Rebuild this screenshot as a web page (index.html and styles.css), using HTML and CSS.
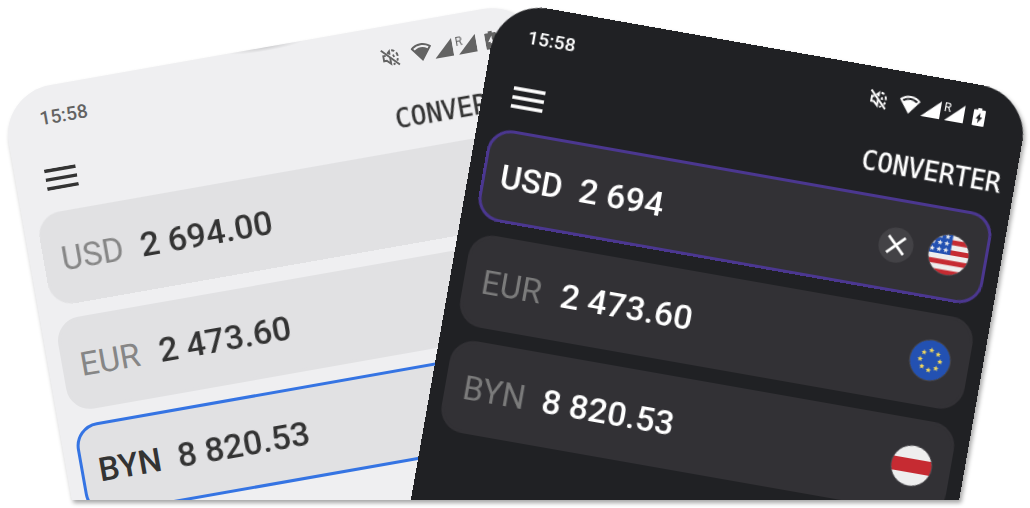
FILE: index.html
```html
<!DOCTYPE html>
<html lang="en">
<head>
<meta charset="utf-8">
<title>Converter</title>
<link rel="stylesheet" href="styles.css">
</head>
<body>
<svg class="symbols" aria-hidden="true">
  <symbol id="mute" viewBox="0 0 20 20">
    <g fill="none" stroke="currentColor" stroke-width="1.900">
      <path d="M1.500 1.500 18 18.500"/>
      <path d="M5.500 7.500H3v5h2.700l3.800 3.700V10M7.300 5.700 9.500 3.500V7"/>
      <path d="M12.500 7.500q1 .8 1 2.500"/>
      <path d="M11.800 2.800q1.700.3 3 1.300M16.300 5.800q1 1.700 1 3.700M17 11.800q-.3 1.300-1 2.400M13.800 16.300q-1 .6-2 .8"/>
    </g>
  </symbol>
  <symbol id="wifi" viewBox="0 0 21 20">
    <path fill="currentColor" fill-rule="evenodd" d="M10.500 1C6.500 1 2.800 2.600 0 5.200L10.500 19 21 5.200C18.200 2.600 14.500 1 10.500 1ZM10.500 3c2.900 0 5.600.9 7.800 2.500l-1.300 1.700a11.500 11.500 0 0 0-13 0L2.700 5.500a13.500 13.500 0 0 1 7.800-2.500Z"/>
  </symbol>
  <symbol id="signal" viewBox="0 0 19 20">
    <path fill="currentColor" d="M19 1v18H0Z"/>
  </symbol>
  <symbol id="battery" viewBox="0 0 12 20">
    <path fill="currentColor" fill-rule="evenodd" d="M4 1h4v1.800h3q1 0 1 1V18q0 1-1 1H1q-1 0-1-1V3.800q0-1 1-1h3ZM7 5.800 2.800 11.800h2.400v4.400L9.300 10H7Z"/>
  </symbol>
  <symbol id="menu" viewBox="0 0 32 22">
    <path stroke="currentColor" stroke-width="3.400" d="M0 2h32M0 11h32M0 20h32"/>
  </symbol>
  <symbol id="cross" viewBox="0 0 35 35">
    <path stroke="currentColor" stroke-width="2.800" d="M9 9 26 26M26 9 9 26"/>
  </symbol>
  <symbol id="star" viewBox="-10 -10 20 20">
    <path d="M0-10 2.700-3.500 9.500-3.100 4.300 1.400 5.900 8.100 0 4.500-5.900 8.100-4.300 1.400-9.500-3.100-2.700-3.500Z"/>
  </symbol>
  <clipPath id="disc"><circle r="20.300"/></clipPath>
  <symbol id="flag-us" viewBox="-21 -21 42 42">
    <g clip-path="url(#disc)">
      <path fill="#eeeeee" d="M-21-21h42v42h-42z"/>
      <path stroke="#c62b32" stroke-width="5.100" d="M-21-12.700h42M-21-2.500h42M-21 7.700h42M-21 18h42"/>
      <path fill="#2351b2" d="M-21-21H1.500V0H-21z"/>
      <g fill="#eeeeee">
        <use href="#star" x="-6.400" y="-20.600" width="5.600" height="5.600"/>
        <use href="#star" x="-13.300" y="-20.600" width="5.600" height="5.600"/>
        <use href="#star" x="-6.400" y="-13.800" width="5.600" height="5.600"/>
        <use href="#star" x="-13.300" y="-13.800" width="5.600" height="5.600"/>
        <use href="#star" x="-20.200" y="-13.800" width="5.600" height="5.600"/>
        <use href="#star" x="-6.400" y="-7" width="5.600" height="5.600"/>
        <use href="#star" x="-13.300" y="-7" width="5.600" height="5.600"/>
        <use href="#star" x="-20.200" y="-7" width="5.600" height="5.600"/>
      </g>
    </g>
    <circle class="flag-rim" r="20.500"/>
  </symbol>
  <symbol id="flag-eu" viewBox="-21 -21 42 42">
    <circle r="20.300" fill="#2351b2"/>
    <g fill="#f2d95c">
      <use href="#star" x="-2.900" y="-12.900" width="5.800" height="5.800"/>
      <use href="#star" x="4.200" y="-10" width="5.800" height="5.800"/>
      <use href="#star" x="7.100" y="-2.900" width="5.800" height="5.800"/>
      <use href="#star" x="4.200" y="4.200" width="5.800" height="5.800"/>
      <use href="#star" x="-2.900" y="7.100" width="5.800" height="5.800"/>
      <use href="#star" x="-10" y="4.200" width="5.800" height="5.800"/>
      <use href="#star" x="-12.900" y="-2.900" width="5.800" height="5.800"/>
      <use href="#star" x="-10" y="-10" width="5.800" height="5.800"/>
    </g>
    <circle class="flag-rim" r="20.500"/>
  </symbol>
  <symbol id="flag-by" viewBox="-21 -21 42 42">
    <g clip-path="url(#disc)">
      <path fill="#eeeeee" d="M-21-21h42v42h-42z"/>
      <path fill="#c62b32" d="M-21-7h42V7h-42z"/>
    </g>
    <circle class="flag-rim" r="20.500"/>
  </symbol>
</svg>

<main class="scene">
  <div class="stage">
    <section class="phone phone-light">
      <div class="status">
        <span class="clock">15:58</span>
        <div class="status-icons">
          <svg class="icon-mute"><use href="#mute"/></svg>
          <svg class="icon-wifi"><use href="#wifi"/></svg>
          <svg class="icon-signal"><use href="#signal"/></svg>
          <span class="roaming"><span class="roaming-mark">R</span><svg class="icon-signal"><use href="#signal"/></svg></span>
          <svg class="icon-battery"><use href="#battery"/></svg>
        </div>
      </div>
      <header class="bar">
        <button class="menu" type="button" aria-label="Menu"><svg class="icon-menu"><use href="#menu"/></svg></button>
        <h1 class="title">CONVERTER</h1>
      </header>
      <div class="cards">
        <div class="card">
          <label class="code" for="light-usd">USD</label>
          <input class="amount" id="light-usd" type="text" value="2 694.00">
          <svg class="flag"><use href="#flag-us"/></svg>
        </div>
        <div class="card">
          <label class="code" for="light-eur">EUR</label>
          <input class="amount" id="light-eur" type="text" value="2 473.60">
          <svg class="flag"><use href="#flag-eu"/></svg>
        </div>
        <div class="card card-active">
          <label class="code" for="light-byn">BYN</label>
          <input class="amount" id="light-byn" type="text" value="8 820.53">
          <svg class="flag"><use href="#flag-by"/></svg>
        </div>
      </div>
    </section>

    <section class="phone phone-dark">
      <div class="status">
        <span class="clock">15:58</span>
        <div class="status-icons">
          <svg class="icon-mute"><use href="#mute"/></svg>
          <svg class="icon-wifi"><use href="#wifi"/></svg>
          <svg class="icon-signal"><use href="#signal"/></svg>
          <span class="roaming"><span class="roaming-mark">R</span><svg class="icon-signal"><use href="#signal"/></svg></span>
          <svg class="icon-battery"><use href="#battery"/></svg>
        </div>
      </div>
      <header class="bar">
        <button class="menu" type="button" aria-label="Menu"><svg class="icon-menu"><use href="#menu"/></svg></button>
        <h1 class="title">CONVERTER</h1>
      </header>
      <div class="cards">
        <div class="card card-active">
          <label class="code" for="dark-usd">USD</label>
          <input class="amount" id="dark-usd" type="text" value="2 694">
          <button class="clear" type="button" aria-label="Clear"><svg class="icon-cross"><use href="#cross"/></svg></button>
          <svg class="flag"><use href="#flag-us"/></svg>
        </div>
        <div class="card">
          <label class="code" for="dark-eur">EUR</label>
          <input class="amount" id="dark-eur" type="text" value="2 473.60">
          <svg class="flag"><use href="#flag-eu"/></svg>
        </div>
        <div class="card">
          <label class="code" for="dark-byn">BYN</label>
          <input class="amount" id="dark-byn" type="text" value="8 820.53">
          <svg class="flag"><use href="#flag-by"/></svg>
        </div>
      </div>
    </section>
  </div>
</main>
</body>
</html>
```
FILE: styles.css
```css
* {
  box-sizing: border-box;
}

body {
  margin: 0;
  background: #ffffff;
  font-family: Roboto, "Liberation Sans", sans-serif;
}

button,
input {
  padding: 0;
  border: 0;
  background: none;
  color: inherit;
  font: inherit;
}

.symbols {
  position: absolute;
  width: 0;
  height: 0;
}

.scene {
  height: 100vh;
  padding-bottom: 8px;
  filter: drop-shadow(2px 3px 2px rgba(0, 0, 0, 0.35));
}

.stage {
  display: flex;
  align-items: flex-start;
  height: 100%;
  overflow: hidden;
}

/* Two tilted handsets, each turned about its top left corner */
.phone {
  position: relative;
  flex: none;
  width: 540px;
  min-height: 700px;
  padding: 21px 14px 14px;
  border-radius: 50px;
  transform-origin: 0 0;
}

.phone-light {
  --card: #e1e1e3;
  --accent: #3574e3;
  --status: #636363;
  --text: #333333;
  --muted: #868686;
  margin-top: 94px;
  background: #efeff1;
  color: var(--text);
  transform: rotate(-10deg);
}

.phone-dark {
  --card: #323135;
  --accent: #4b3790;
  --status: #ffffff;
  --text: #ffffff;
  --muted: #7b7b7b;
  margin-left: -41px;
  background: #202124;
  color: var(--text);
  transform: rotate(10deg);
}

/* Earpiece shade in the middle of the top edge */
.phone-light::before {
  content: "";
  position: absolute;
  top: 0;
  left: 232px;
  width: 76px;
  height: 4px;
  background: radial-gradient(ellipse at top, rgba(0, 0, 0, 0.14), transparent 70%);
}

.status {
  display: flex;
  justify-content: space-between;
  align-items: center;
  height: 22px;
  padding: 0 27px 0 21px;
  color: var(--status);
}

.clock {
  font-size: 19px;
  line-height: 22px;
  font-weight: 500;
}

.status-icons {
  display: flex;
  align-items: center;
}

.icon-mute {
  width: 20px;
  height: 20px;
  margin-right: 11px;
}

.icon-wifi {
  width: 21px;
  height: 20px;
  margin-right: 2px;
}

.icon-signal {
  display: block;
  width: 19px;
  height: 20px;
}

.roaming {
  position: relative;
  margin: 0 9px 0 5px;
}

.roaming-mark {
  position: absolute;
  top: -1px;
  left: -2px;
  font-size: 12px;
  line-height: 14px;
}

.icon-battery {
  width: 12px;
  height: 20px;
}

.bar {
  display: flex;
  justify-content: space-between;
  align-items: center;
  height: 32px;
  margin: 35px 0 16px;
  padding-left: 16px;
}

.menu {
  display: flex;
  align-self: flex-start;
  margin-top: 4px;
}

.icon-menu {
  width: 32px;
  height: 22px;
}

.title {
  margin: 0;
  font-family: "DejaVu Sans Mono", monospace;
  font-size: 26px;
  line-height: 32px;
  font-weight: 400;
  -webkit-text-stroke: 1px color-mix(in srgb, currentColor 40%, transparent);
}

.cards {
  display: grid;
  grid-template-columns: minmax(0, 1fr);
  gap: 14px;
}

.card {
  display: flex;
  align-items: center;
  height: 93px;
  padding: 0 15px;
  border: 3px solid var(--card);
  border-radius: 24px;
  background: var(--card);
  line-height: 42px;
}

.code {
  flex: none;
  width: 80px;
  padding-top: 2px;
  color: var(--muted);
  font-size: 33px;
}

.amount {
  flex: 1;
  min-width: 0;
  font-size: 34px;
  font-weight: 500;
}

.card-active {
  border-color: var(--accent);
}

.card-active .code {
  color: var(--text);
  font-weight: 500;
}

.clear {
  display: flex;
  flex: none;
  margin: 0 15px;
  border-radius: 50%;
  background: #434246;
}

.icon-cross {
  width: 35px;
  height: 35px;
}

.flag {
  flex: none;
  width: 42px;
  height: 42px;
}

.flag-rim {
  fill: none;
  stroke: #48474b;
  stroke-width: 1px;
}
```
